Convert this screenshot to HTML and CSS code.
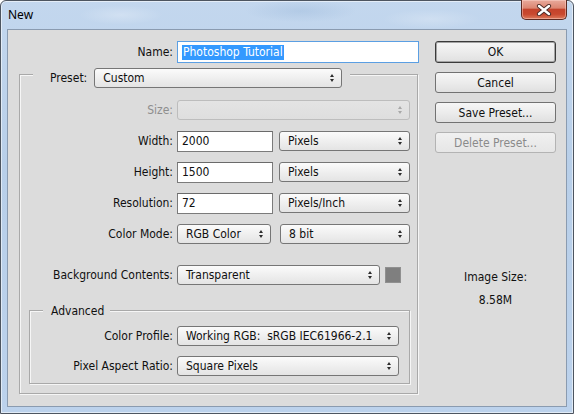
FILE: index.html
```html
<!DOCTYPE html>
<html>
<head>
<meta charset="utf-8">
<title>New</title>
<link rel="stylesheet" href="styles.css">
</head>
<body>
<div class="window">
  <div class="titlebar">
    <span class="title">New</span>
    <div class="close">
      <svg width="16" height="12" viewBox="0 0 16 12">
        <path d="M3 2 L13 10 M13 2 L3 10" stroke="#4a2a26" stroke-width="4.2" stroke-linecap="round" fill="none"/>
        <path d="M3 2 L13 10 M13 2 L3 10" stroke="#ffffff" stroke-width="2.4" stroke-linecap="round" fill="none"/>
      </svg>
    </div>
  </div>
  <div class="client">
    <div class="form">
      <div class="row name-row">
        <span class="lbl lbl-name">Name:</span>
        <div class="input input-name focused"><span class="selected">Photoshop Tutorial</span></div>
      </div>
      <div class="group outer">
        <div class="legend legend-preset">
          <span class="plabel">Preset:</span>
          <div class="select w-preset"><span>Custom</span><span class="arrows"><i class="up"></i><i class="down"></i></span></div>
        </div>
        <div class="row r-size">
          <span class="lbl lbl-outer disabled-text">Size:</span>
          <div class="select disabled w-full"><span></span><span class="arrows"><i class="up"></i><i class="down"></i></span></div>
        </div>
        <div class="row r-gap">
          <span class="lbl lbl-outer">Width:</span>
          <div class="input w-num">2000</div>
          <div class="select w-unit"><span>Pixels</span><span class="arrows"><i class="up"></i><i class="down"></i></span></div>
        </div>
        <div class="row r-gap">
          <span class="lbl lbl-outer">Height:</span>
          <div class="input w-num">1500</div>
          <div class="select w-unit"><span>Pixels</span><span class="arrows"><i class="up"></i><i class="down"></i></span></div>
        </div>
        <div class="row r-gap">
          <span class="lbl lbl-outer">Resolution:</span>
          <div class="input w-num">72</div>
          <div class="select w-unit"><span>Pixels/Inch</span><span class="arrows"><i class="up"></i><i class="down"></i></span></div>
        </div>
        <div class="row r-gap">
          <span class="lbl lbl-outer">Color Mode:</span>
          <div class="select w-mode"><span>RGB Color</span><span class="arrows"><i class="up"></i><i class="down"></i></span></div>
          <div class="select w-bit"><span>8 bit</span><span class="arrows"><i class="up"></i><i class="down"></i></span></div>
        </div>
        <div class="row r-bg">
          <span class="lbl lbl-outer">Background Contents:</span>
          <div class="select w-bgc"><span>Transparent</span><span class="arrows"><i class="up"></i><i class="down"></i></span></div>
          <div class="swatch"></div>
        </div>
        <div class="group inner">
          <div class="legend legend-adv">Advanced</div>
          <div class="row r-prof">
            <span class="lbl lbl-inner">Color Profile:</span>
            <div class="select w-prof"><span>Working RGB:&nbsp; sRGB IEC61966-2.1</span><span class="arrows"><i class="up"></i><i class="down"></i></span></div>
          </div>
          <div class="row r-par">
            <span class="lbl lbl-inner">Pixel Aspect Ratio:</span>
            <div class="select w-prof"><span>Square Pixels</span><span class="arrows"><i class="up"></i><i class="down"></i></span></div>
          </div>
        </div>
      </div>
    </div>
    <div class="side">
      <div class="btn default">OK</div>
      <div class="btn">Cancel</div>
      <div class="btn">Save Preset...</div>
      <div class="btn btn-disabled">Delete Preset...</div>
      <div class="imgsize">
        <div class="is-label">Image Size:</div>
        <div class="is-value">8.58M</div>
      </div>
    </div>
  </div>
</div>
</body>
</html>
```

FILE: styles.css
```css
html, body {
  margin: 0;
  padding: 0;
  background: #ffffff;
}

.window {
  width: 574px;
  height: 414px;
  box-sizing: border-box;
  border: 1px solid #4d5560;
  border-radius: 6px 6px 0 0;
  background:
    radial-gradient(ellipse 60px 14px at 120px 14px, rgba(255,255,255,0.25), rgba(255,255,255,0) 70%),
    radial-gradient(ellipse 80px 16px at 300px 10px, rgba(150,180,215,0.35), rgba(150,180,215,0) 70%),
    radial-gradient(ellipse 70px 14px at 430px 18px, rgba(255,255,255,0.22), rgba(255,255,255,0) 70%),
    linear-gradient(180deg, #c3d7ee 0%, #b8cfe9 40%, #bcd2ec 100%);
  box-shadow: inset 0 0 0 1px rgba(255,255,255,0.55);
  display: flex;
  flex-direction: column;
  font-family: "DejaVu Sans Condensed", "DejaVu Sans", sans-serif;
  font-stretch: condensed;
  font-size: 12px;
  color: #101010;
}

.titlebar {
  height: 28px;
  display: flex;
  align-items: flex-start;
}

.title {
  font-family: "Noto Sans", "Open Sans", sans-serif;
  font-stretch: normal;
  font-size: 12px;
  color: #000;
  padding: 6px 0 0 7px;
  line-height: 16px;
}

.close {
  margin-left: auto;
  margin-right: 6px;
  margin-top: -1px;
  width: 46px;
  height: 20px;
  box-sizing: border-box;
  border: 1px solid #5c2a22;
  border-top: none;
  border-radius: 0 0 5px 5px;
  background: linear-gradient(180deg, #e8aa9c 0%, #dc8672 42%, #c4432c 50%, #c9492f 75%, #dc7a5c 100%);
  box-shadow: inset 0 0 0 1px rgba(255,220,210,0.45);
  display: flex;
  align-items: center;
  justify-content: center;
}

.client {
  margin: 0 6px;
  width: 560px;
  height: 378px;
  box-sizing: border-box;
  border: 1px solid #8a9bb0;
  background: #dcdcdc;
  display: flex;
  align-items: flex-start;
}

.form {
  padding-top: 11px;
  display: flex;
  flex-direction: column;
  align-items: flex-start;
}

.row {
  display: flex;
  align-items: center;
  height: 20px;
  gap: 4px;
  white-space: nowrap;
}

.lbl {
  text-align: right;
  flex: none;
}

.lbl-name { width: 165px; }
.lbl-outer { width: 153px; }
.lbl-inner { width: 143px; }

.disabled-text { color: #8e8e8e; }

.name-row { height: 22px; }

.input {
  box-sizing: border-box;
  height: 21px;
  background: #ffffff;
  border: 1px solid #7b7b7b;
  border-top-color: #6a6a6a;
  padding-left: 4px;
  display: flex;
  align-items: center;
  flex: none;
}

.input-name {
  width: 242px;
  height: 22px;
}

.focused {
  border-color: #5b9fe3;
}

.selected {
  background: #3399ff;
  color: #ffffff;
  padding: 0 1px;
  line-height: 15px;
}

.select {
  box-sizing: border-box;
  height: 20px;
  border: 1px solid #767676;
  border-radius: 3px;
  background: linear-gradient(180deg, #fbfbfb 0%, #eeeeee 55%, #e4e4e4 100%);
  display: flex;
  align-items: center;
  justify-content: space-between;
  padding: 0 6px 0 8px;
  flex: none;
}

.select.disabled {
  border-color: #bdbdbd;
  background: linear-gradient(180deg, #e4e4e4 0%, #dedede 100%);
}

.arrows {
  display: flex;
  flex-direction: column;
  gap: 2px;
  width: 5px;
}

.arrows i {
  display: block;
  width: 0;
  height: 0;
  border-left: 2.5px solid transparent;
  border-right: 2.5px solid transparent;
}

.arrows .up { border-bottom: 3px solid #2c2c2c; }
.arrows .down { border-top: 3px solid #2c2c2c; }
.disabled .arrows .up { border-bottom-color: #a8a8a8; }
.disabled .arrows .down { border-top-color: #a8a8a8; }

.w-preset { width: 248px; }
.w-full { width: 233px; }
.w-num { width: 96px; }
.w-unit { width: 131px; margin-left: 2px; }
.w-mode { width: 94px; }
.w-bit { width: 130px; margin-left: 5px; }
.w-bgc { width: 203px; }
.w-prof { width: 222px; }

.swatch {
  width: 16px;
  height: 16px;
  box-sizing: border-box;
  background: #7f7f7f;
  border: 1px solid #909090;
  margin-left: 1px;
  flex: none;
}

.group {
  box-sizing: border-box;
  border: 1px solid #a9a9a9;
  box-shadow: inset 1px 1px 0 #f6f6f6, 1px 1px 0 #f6f6f6;
  display: flex;
  flex-direction: column;
  align-items: flex-start;
}

.outer {
  margin: 11px 0 0 11px;
  width: 399px;
  padding-bottom: 9px;
}

.inner {
  margin: 25px 0 0 9px;
  width: 381px;
  padding-bottom: 7px;
}

.legend {
  background: #dcdcdc;
  display: flex;
  align-items: center;
  white-space: nowrap;
}

.legend-preset {
  margin: -7px 0 0 13px;
  padding: 0 8px 0 17px;
  gap: 7px;
  height: 20px;
}

.legend-adv {
  margin: -8px 0 0 13px;
  padding: 0 6px 0 8px;
  height: 15px;
}

.r-size { margin-top: 12px; }
.r-gap { margin-top: 11px; }
.r-bg { margin-top: 21px; }
.r-prof { margin-top: 8px; }
.r-par { margin-top: 10px; }

.side {
  margin-left: auto;
  margin-right: 10px;
  padding-top: 11px;
  width: 121px;
  display: flex;
  flex-direction: column;
  gap: 9px;
}

.btn {
  box-sizing: border-box;
  height: 21px;
  border: 1px solid #727272;
  border-radius: 3px;
  background: linear-gradient(180deg, #f6f6f6 0%, #ececec 50%, #e0e0e0 100%);
  display: flex;
  align-items: center;
  justify-content: center;
  white-space: nowrap;
}

.btn.default {
  height: 22px;
  border-color: #3a3a3a;
  box-shadow: inset 0 0 0 1px #a4a4a4;
}

.btn-disabled {
  border-color: #b3b3b3;
  color: #8a8a8a;
  background: linear-gradient(180deg, #f0f0f0 0%, #e6e6e6 100%);
}

.imgsize {
  margin-top: 108px;
  display: flex;
  flex-direction: column;
  align-items: center;
  gap: 8px;
  line-height: 15px;
}
```
